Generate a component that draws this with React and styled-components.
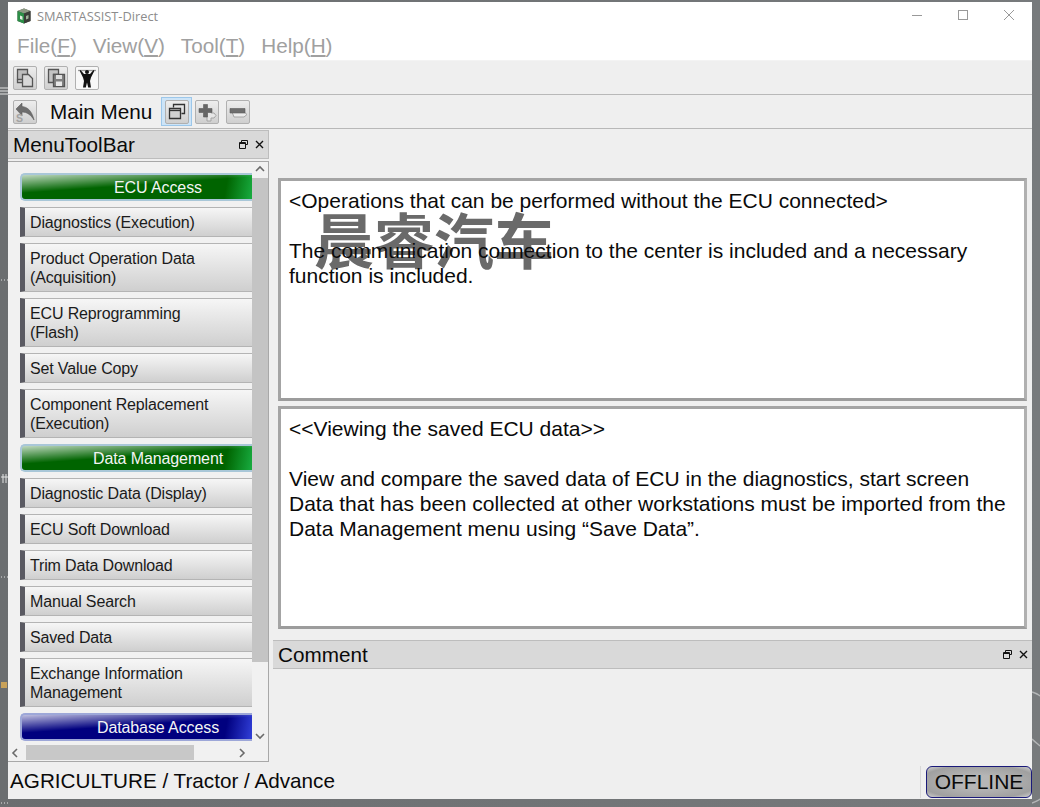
import React from "react";
import styled, { createGlobalStyle } from "styled-components";

const GlobalStyle = createGlobalStyle`
  html, body {
    margin: 0;
    padding: 0;
    width: 1040px;
    height: 807px;
    overflow: hidden;
    background: #707375;
    font-family: "Liberation Sans", Arial, sans-serif;
  }
`;

const menuItems = [
  { label: "ECU Access", kind: "green" },
  { label: "Diagnostics (Execution)" },
  { label: "Product Operation Data\n(Acquisition)", tall: true },
  { label: "ECU Reprogramming\n(Flash)", tall: true },
  { label: "Set Value Copy" },
  { label: "Component Replacement\n(Execution)", tall: true },
  { label: "Data Management", kind: "green" },
  { label: "Diagnostic Data (Display)" },
  { label: "ECU Soft Download" },
  { label: "Trim Data Download" },
  { label: "Manual Search" },
  { label: "Saved Data" },
  { label: "Exchange Information\nManagement", tall: true },
  { label: "Database Access", kind: "blue" },
];

function App() {
  return (
    <>
      <GlobalStyle />
      <Desktop>
        <DesktopScraps width="8" height="807" viewBox="0 0 8 807">
          <path d="M0 88h8M0 91h8M0 94h8M1 280h1M4 280h1M7 280h1M1 577h1M4 577h1M7 577h1M1 803h1M4 803h1M7 803h1M1 477h7M3 474v9M6 474v9" stroke="#e4e4e4" />
          <path d="M1 682h6v6H1z" fill="#c9a25a" />
        </DesktopScraps>
        <WallpaperCurves width="8" height="120" viewBox="0 0 8 120">
          <path d="M0 5c3 1 6 2 8 4M0 52c3 3 6 5 8 7M0 116c3-1 6-2 8-4" fill="none" stroke="#b4b6b7" strokeWidth="1.500" />
        </WallpaperCurves>
        <Window>
          <TitleBar>
            <AppLogo />
            <TitleText>SMARTASSIST-Direct</TitleText>
            <WindowControls>
              <WinButton>
                <svg width="12" height="12" viewBox="0 0 12 12"><path d="M1 6.500h10" stroke="#999" /></svg>
              </WinButton>
              <WinButton>
                <svg width="12" height="12" viewBox="0 0 12 12"><rect x="1.500" y="1.500" width="9" height="9" fill="none" stroke="#999" /></svg>
              </WinButton>
              <WinButton>
                <svg width="12" height="12" viewBox="0 0 12 12"><path d="M1 1l10 10M11 1L1 11" stroke="#999" /></svg>
              </WinButton>
            </WindowControls>
          </TitleBar>

          <MenuBar>
            <MenuEntry>File(<u>F</u>)</MenuEntry>
            <MenuEntry>View(<u>V</u>)</MenuEntry>
            <MenuEntry>Tool(<u>T</u>)</MenuEntry>
            <MenuEntry>Help(<u>H</u>)</MenuEntry>
          </MenuBar>

          <ToolRow>
            <ToolButton><CopyIcon /></ToolButton>
            <ToolButton><SaveIcon /></ToolButton>
            <ToolButton $light><LifterIcon /></ToolButton>
          </ToolRow>

          <ToolRow>
            <ToolButton><BackIcon /></ToolButton>
            <NavTitle>Main Menu</NavTitle>
            <ActiveSlot><ToolButton><RestoreIcon /></ToolButton></ActiveSlot>
            <ToolButton><PlusIcon /></ToolButton>
            <ToolButton><MinusIcon /></ToolButton>
          </ToolRow>

          <Workspace>
            <LeftDock>
              <DockHeader>
                <DockTitle>MenuToolBar</DockTitle>
                <DockIcons />
              </DockHeader>
              <MenuPanel>
                <MenuScrollRow>
                  <MenuList>
                    {menuItems.map((item) =>
                      item.kind ? (
                        <SectionButton key={item.label} $kind={item.kind}>{item.label}</SectionButton>
                      ) : (
                        <MenuButton key={item.label} $tall={item.tall}>{item.label}</MenuButton>
                      )
                    )}
                  </MenuList>
                  <VScroll>
                    <Arrow dir="up" />
                    <VThumb />
                    <Arrow dir="down" />
                  </VScroll>
                </MenuScrollRow>
                <HScroll>
                  <Arrow dir="left" />
                  <HThumb />
                  <Arrow dir="right" />
                </HScroll>
              </MenuPanel>
            </LeftDock>

            <RightArea>
              <InfoColumn>
                <InfoBox>
                  <Watermark>晨睿汽车</Watermark>
                  <InfoText>{"<Operations that can be performed without the ECU connected>"}</InfoText>
                  <InfoText>{"\u00a0"}</InfoText>
                  <InfoText>The communication connection to the center is included and a necessary function is included.</InfoText>
                </InfoBox>
                <InfoBox>
                  <InfoText>{"<<Viewing the saved ECU data>>"}</InfoText>
                  <InfoText>{"\u00a0"}</InfoText>
                  <InfoText>View and compare the saved data of ECU in the diagnostics, start screen</InfoText>
                  <InfoText>Data that has been collected at other workstations must be imported from the Data Management menu using “Save Data”.</InfoText>
                </InfoBox>
              </InfoColumn>
              <CommentHeader>
                <DockTitle>Comment</DockTitle>
                <DockIcons />
              </CommentHeader>
            </RightArea>
          </Workspace>

          <StatusBar>
            <StatusText>AGRICULTURE / Tractor / Advance</StatusText>
            <StatusSlot>
              <OfflineBadge>OFFLINE</OfflineBadge>
            </StatusSlot>
          </StatusBar>
        </Window>
      </Desktop>
    </>
  );
}

export default App;

function AppLogo() {
  return (
    <LogoSvg width="16" height="16" viewBox="0 0 16 16">
      <path d="M8 .5l6.500 2.500v10L8 15.500 1.500 13V3z" fill="#4b5148" />
      <path d="M8 .5l6.500 2.500L8 5.500 1.500 3z" fill="#8d9a84" />
      <path d="M1.500 3L8 5.500v10L1.500 13z" fill="#2c8f48" />
      <path d="M4 7.500l2.500 1V12L4 11z" fill="#e6eee2" />
      <path d="M8 5.500L14.500 3v10L8 15.500z" fill="#3a3d38" />
      <path d="M10 8l2.500-1v3.500L10 11.500z" fill="#9fb39a" />
    </LogoSvg>
  );
}

function DockIcons() {
  return (
    <DockIconRow>
      <svg width="9" height="9" viewBox="0 0 9 9">
        <path d="M2.500 2.500V.5h6v4H6.500M.5 2.500h6v6h-6zM.5 3.500h6" fill="none" stroke="#111" />
      </svg>
      <svg width="9" height="9" viewBox="0 0 9 9">
        <path d="M1 1l7 7M8 1L1 8" stroke="#111" strokeWidth="1.400" />
      </svg>
    </DockIconRow>
  );
}

function Arrow({ dir }) {
  const paths = {
    up: "M1 6l4-4 4 4",
    down: "M1 3l4 4 4-4",
    left: "M6 1L2 5l4 4",
    right: "M3 1l4 4-4 4",
  };
  return (
    <ArrowBox>
      <svg width="10" height="10" viewBox="0 0 10 10">
        <path d={paths[dir]} fill="none" stroke="#6a6a6a" strokeWidth="1.600" />
      </svg>
    </ArrowBox>
  );
}

function CopyIcon() {
  return (
    <svg width="22" height="22" viewBox="0 0 22 22">
      <path d="M3.500 2.500h10v10h-10z" fill="#bdbdbd" stroke="#555" strokeWidth="1.300" />
      <path d="M3.500 12.500v3h5" fill="none" stroke="#555" strokeWidth="1.300" />
      <path d="M8.500 7.500h6l4 4v8h-10z" fill="#d8d8d8" stroke="#555" strokeWidth="1.300" />
    </svg>
  );
}

function SaveIcon() {
  return (
    <svg width="22" height="22" viewBox="0 0 22 22">
      <path d="M3.500 2.500h10v5h-5v8h-5z" fill="#c4c4c4" stroke="#555" strokeWidth="1.300" />
      <path d="M8.500 7.500h11v12h-11z" fill="#808080" stroke="#555" strokeWidth="1.300" />
      <path d="M11 8h6v4h-6z" fill="#dedede" />
      <path d="M11 14.500h6V19h-6z" fill="#e8e8e8" />
    </svg>
  );
}

function LifterIcon() {
  return (
    <svg width="22" height="22" viewBox="0 0 22 22">
      <path d="M2 3.500h18" stroke="#9a9a9a" strokeWidth="1.300" />
      <circle cx="11" cy="5" r="2" fill="#111" />
      <path d="M4.500 3l3.500 4h6l3.500-4 .9.700L15 10.500 14 14l1 6.500h-2.800L11 15.500l-1.200 5H7L8 14l-1-3.500L3.600 3.700z" fill="#111" />
    </svg>
  );
}

function BackIcon() {
  return (
    <svg width="22" height="22" viewBox="0 0 22 22">
      <path d="M2 8l6-6v3.500c6 .5 10 5 12 13.500-3-5-7-8-12-8v3.500z" fill="#6e6e6e" stroke="#5c5c5c" strokeWidth=".6" />
      <text x="2" y="21" fontFamily="Liberation Sans" fontSize="10.500" fontWeight="700" fill="#a2a2a2">S</text>
    </svg>
  );
}

function RestoreIcon() {
  return (
    <svg width="18" height="18" viewBox="0 0 18 18">
      <path d="M5.500 4.500v-3h11v9h-3" fill="none" stroke="#333" strokeWidth="1.300" />
      <path d="M1.500 5.500h11v10h-11z" fill="#d0d0d0" stroke="#333" strokeWidth="1.300" />
      <path d="M1.500 7.500h11" stroke="#333" strokeWidth="1.300" />
    </svg>
  );
}

function PlusIcon() {
  return (
    <svg width="22" height="22" viewBox="0 0 22 22">
      <path d="M11 9h4v3h3l2 2.500-2 2.500h-3v3h-4z" fill="#e6e6e6" stroke="#a4a4a4" />
      <path d="M7.500 3.500h4v4h4.500v4h-4.500v4.500h-4v-4.500H3v-4h4.500z" fill="#666" stroke="#5a5a5a" strokeWidth=".6" />
    </svg>
  );
}

function MinusIcon() {
  return (
    <svg width="22" height="22" viewBox="0 0 22 22">
      <path d="M5 11h12l3 2.500-3 2.500H7z" fill="#ececec" stroke="#a4a4a4" />
      <path d="M3 7.500h15v4.500H3z" fill="#6e6e6e" stroke="#5c5c5c" strokeWidth=".6" />
    </svg>
  );
}

const Desktop = styled.div`
  position: relative;
  width: 1040px;
  height: 807px;
  padding: 2px 8px 8px;
  box-sizing: border-box;
  background: linear-gradient(90deg, #6b6e70, #777a7c);
`;

const DesktopScraps = styled.svg`
  position: absolute;
  left: 0;
  top: 0;
`;

const WallpaperCurves = styled.svg`
  position: absolute;
  right: 0;
  bottom: 0;
`;

const Window = styled.div`
  position: relative;
  display: flex;
  flex-direction: column;
  width: 1024px;
  height: 797px;
  background: #efefef;
`;

const TitleBar = styled.div`
  display: flex;
  align-items: center;
  height: 28px;
  flex: none;
  padding-left: 8px;
  background: #fff;
`;

const LogoSvg = styled.svg`
  flex: none;
`;

const TitleText = styled.span`
  margin-left: 5px;
  font: 12.800px "Open Sans", "Liberation Sans", sans-serif;
  color: #8c8c8c;
`;

const WindowControls = styled.div`
  display: flex;
  margin-left: auto;
`;

const WinButton = styled.div`
  display: flex;
  align-items: center;
  justify-content: center;
  width: 46px;
  height: 26px;
  padding-bottom: 2px;
`;

const MenuBar = styled.div`
  display: flex;
  align-items: center;
  gap: 16px;
  height: 31px;
  flex: none;
  box-sizing: border-box;
  padding: 2px 0 0 9px;
  background: #fff;
  border-bottom: 1px solid #f3f3f3;
`;

const MenuEntry = styled.span`
  font-size: 20.700px;
  color: #a0a0a0;
`;

const ToolRow = styled.div`
  display: flex;
  align-items: center;
  gap: 7px;
  height: 34px;
  flex: none;
  box-sizing: border-box;
  padding: 0 0 0 5px;
  border-bottom: 1px solid #b8b8b8;
`;

const ToolButton = styled.div`
  display: flex;
  align-items: center;
  justify-content: center;
  width: 24px;
  height: 24px;
  box-sizing: border-box;
  border: 1px solid #b0b0b0;
  border-radius: 2px;
  background: ${(p) => (p.$light ? "#f8f8f8" : "linear-gradient(#ededed, #cfcfcf)")};
`;

const NavTitle = styled.span`
  margin: 0 2px 0 6px;
  font-size: 20.700px;
  color: #0a0a0a;
`;

const ActiveSlot = styled.div`
  display: flex;
  align-items: center;
  justify-content: center;
  width: 31px;
  height: 29px;
  margin-right: -4px;
  box-sizing: border-box;
  background: #cde4f7;
  border: 1px solid #9cc7ea;
`;

const Workspace = styled.div`
  display: flex;
  flex: 1;
  min-height: 0;
`;

const LeftDock = styled.div`
  display: flex;
  flex-direction: column;
  width: 261px;
  flex: none;
`;

const DockHeader = styled.div`
  display: flex;
  align-items: center;
  justify-content: space-between;
  height: 29px;
  flex: none;
  margin-top: 1px;
  padding: 0 4px 0 5px;
  box-sizing: border-box;
  background: #d9d9d9;
  border: 1px solid #bdbdbd;
  border-width: 1px 1px 1px 0;
`;

const CommentHeader = styled(DockHeader)`
  margin-top: 11px;
  border-width: 1px 0;
`;

const DockTitle = styled.span`
  font-size: 20.700px;
  color: #0a0a0a;
`;

const DockIconRow = styled.div`
  display: flex;
  align-items: center;
  gap: 7px;
`;

const MenuPanel = styled.div`
  display: flex;
  flex-direction: column;
  height: 601px;
  margin-top: 2px;
  box-sizing: border-box;
  border: 1px solid #a8a8a8;
  border-left: 0;
`;

const MenuScrollRow = styled.div`
  display: flex;
  flex: 1;
  min-height: 0;
`;

const MenuList = styled.div`
  display: flex;
  flex-direction: column;
  gap: 6px;
  flex: 1;
  padding: 11px 0 0 12px;
  overflow: hidden;
  background: #f1f1f1;
`;

const SectionButton = styled.div`
  display: flex;
  align-items: center;
  justify-content: center;
  flex: none;
  height: 28px;
  padding: 1px 0 0 42px;
  box-sizing: border-box;
  border: 2px solid ${(p) => (p.$kind === "blue" ? "#9da7d8" : "#a9c7d8")};
  border-right: 0;
  border-radius: 5px 0 0 5px;
  font-size: 16px;
  letter-spacing: -0.100px;
  color: #f4f4f4;
  background:
    linear-gradient(176deg, rgba(255, 255, 255, 0.75) 0%, rgba(255, 255, 255, 0) 45%),
    linear-gradient(100deg, transparent 88%, ${(p) => (p.$kind === "blue" ? "rgba(70,90,255,.7)" : "rgba(30,190,80,.8)")} 100%),
    ${(p) => (p.$kind === "blue" ? "#00007f" : "#006400")};
`;

const MenuButton = styled.div`
  flex: none;
  display: flex;
  align-items: center;
  height: ${(p) => (p.$tall ? 49 : 30)}px;
  box-sizing: border-box;
  padding-left: 5px;
  white-space: pre-line;
  border-left: 5px solid #5a5a62;
  border-top: 1px solid #b4b4b4;
  border-bottom: 1px solid #b4b4b4;
  font-size: 16px;
  line-height: 19px;
  letter-spacing: -0.150px;
  color: #1b1b1b;
  background: linear-gradient(#f6f6f6, #cfcfcf);
`;

const VScroll = styled.div`
  display: flex;
  flex-direction: column;
  width: 16px;
  flex: none;
  background: #f1f1f1;
`;

const VThumb = styled.div`
  flex: 1;
  margin-bottom: 66px;
  background: #c4c4c4;
`;

const ArrowBox = styled.div`
  display: flex;
  align-items: center;
  justify-content: center;
  width: 16px;
  height: 16px;
  flex: none;
`;

const HScroll = styled.div`
  display: flex;
  align-items: center;
  height: 17px;
  flex: none;
  padding-right: 18px;
  background: #f1f1f1;
`;

const HThumb = styled.div`
  width: 168px;
  height: 15px;
  margin: 0 auto 0 2px;
  background: #c8c8c8;
`;

const RightArea = styled.div`
  display: flex;
  flex-direction: column;
  flex: 1;
  min-width: 0;
  padding-left: 4px;
`;

const InfoColumn = styled.div`
  display: flex;
  flex-direction: column;
  gap: 5px;
  margin: 49px 5px 0 5px;
`;

const InfoBox = styled.div`
  position: relative;
  height: 223px;
  box-sizing: border-box;
  padding: 7px 8px;
  background: #fff;
  border: 3px solid #a4a4a4;
  border-right-color: #b0b0b0;
  border-bottom-color: #9c9c9c;
`;

const InfoText = styled.div`
  position: relative;
  font-size: 21px;
  line-height: 25px;
  color: #0a0a0a;
`;

const Watermark = styled.div`
  position: absolute;
  left: 33px;
  top: 22px;
  font: 700 60px/70px "Noto Sans CJK SC", sans-serif;
  color: #6a6a6a;
`;

const StatusBar = styled.div`
  display: flex;
  align-items: center;
  height: 34px;
  flex: none;
  padding-left: 2px;
`;

const StatusText = styled.span`
  margin-bottom: 2px;
  font-size: 20.700px;
  color: #0a0a0a;
`;

const StatusSlot = styled.div`
  display: flex;
  align-items: center;
  height: 32px;
  margin-left: auto;
  padding-left: 5px;
  border-left: 1px solid #d8d8d8;
`;

const OfflineBadge = styled.div`
  display: flex;
  align-items: center;
  justify-content: center;
  width: 106px;
  height: 32px;
  box-sizing: border-box;
  border: 1px solid #1a1a7a;
  border-radius: 6px;
  font-size: 21px;
  color: #0a0a0a;
  background: radial-gradient(ellipse at center, #b6b6b6 30%, #a0a0a0 80%, #d0d0d0 100%);
`;
